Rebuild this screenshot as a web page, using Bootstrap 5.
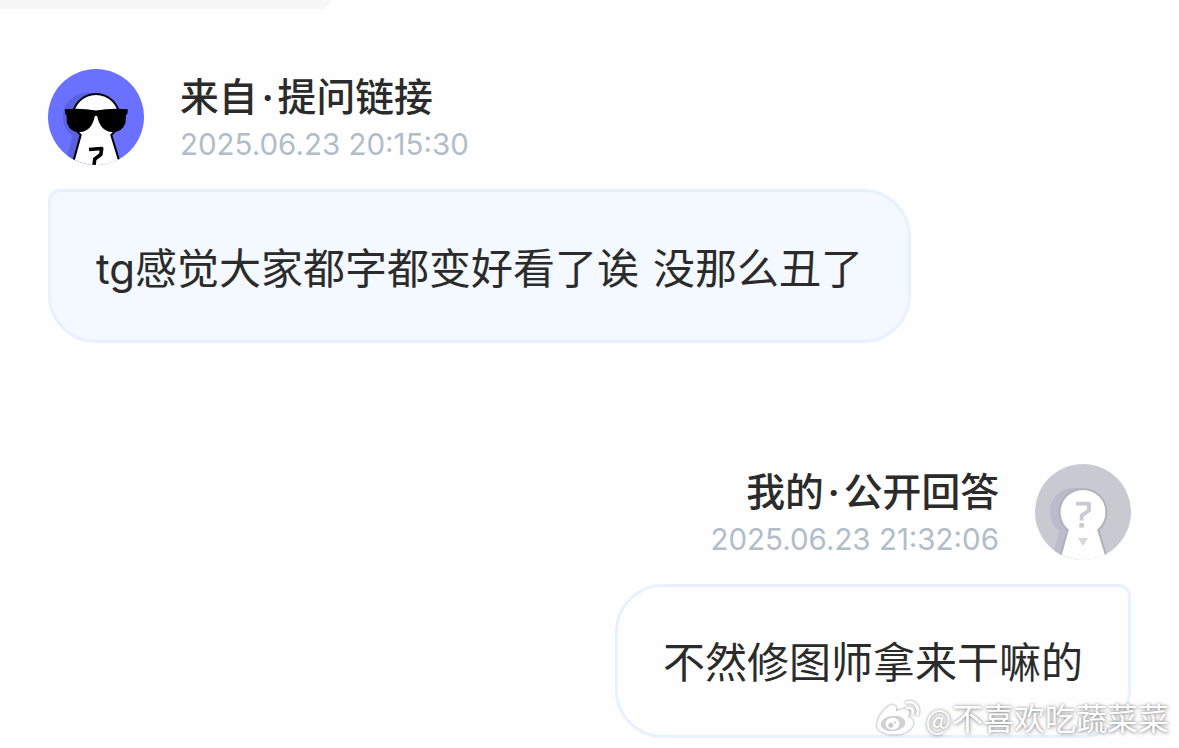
<!DOCTYPE html>
<html lang="zh-CN">
<head>
  <meta charset="UTF-8">
  <meta name="viewport" content="width=device-width, initial-scale=1">
  <title>提问与回答</title>
  <link href="https://cdn.jsdelivr.net/npm/bootstrap@5.3.2/dist/css/bootstrap.min.css" rel="stylesheet">
  <style>
    body {
      font-family: "Inter", "Noto Sans CJK SC", sans-serif;
      color: #2b2b2b;
      background-color: #fefefe;
      height: 748px;
    }
    .prev-bubble {
      width: 330px;
      height: 9px;
      background-color: #f7f7f7;
      border-bottom-right-radius: 9px;
    }
    .thread {
      padding: 60px 48px 0;
    }
    .avatar {
      width: 96px;
      height: 96px;
    }
    .sender {
      gap: 36px;
      height: 96px;
      margin-bottom: 24px;
    }
    .sender-name {
      height: 55px;
      font-size: 38.8px;
      line-height: 50px;
      font-weight: 500;
      font-family: "Noto Sans CJK SC", sans-serif;
    }
    .dot {
      display: inline-block;
      width: 20px;
      line-height: 1;
      text-align: center;
      font-family: "Inter", sans-serif;
      font-weight: 600;
    }
    .sent-at {
      font-size: 29.5px;
      line-height: 40px;
      color: #b1bdc8;
    }
    .bubble {
      height: 154px;
      font-size: 42px;
      line-height: 60px;
      word-spacing: 2px;
      border: 3px solid #e8f2fe;
      white-space: nowrap;
    }
    .bubble-ask {
      width: 863px;
      padding: 6px 0 0 45px;
      background-color: #f4f8ff;
      border-radius: 12px 48px 48px 48px;
    }
    .bubble-reply {
      width: 516px;
      padding: 4px 0 0 45px;
      border-radius: 48px 12px 48px 48px;
    }
    .message-reply {
      margin-top: 121px;
    }
    .watermark {
      right: 10px;
      bottom: 6px;
      gap: 5px;
      font-size: 31px;
      line-height: 46px;
      color: #fff;
      font-family: "Noto Sans CJK SC", sans-serif;
      text-shadow: 0 0 3px rgba(0, 0, 0, .35), 1px 1px 4px rgba(0, 0, 0, .3);
    }
    .watermark svg {
      width: 44px;
      height: 36px;
      filter: drop-shadow(0 0 1px rgba(0, 0, 0, .5));
    }
    .at-sign {
      font-size: 27px;
      margin-right: 1px;
    }
  </style>
</head>
<body class="position-relative overflow-hidden">
  <div class="prev-bubble"></div>

  <main class="thread d-flex flex-column">
    <section class="message">
      <div class="sender d-flex">
        <svg class="avatar flex-shrink-0" viewBox="0 0 96 96">
          <defs>
            <clipPath id="round"><circle cx="48" cy="48" r="48"/></clipPath>
          </defs>
          <g clip-path="url(#round)">
            <rect width="96" height="96" fill="#6a70ff"/>
            <path d="M16 98 L24.500 67 A24 24 0 0 1 42 24 L60 40 L40 98 Z" fill="#5b60de"/>
            <path d="M23 101 L32.700 66 A23.400 23.400 0 1 1 63.300 66 L74 101 Z" fill="#fefefe" stroke="#000" stroke-width="2"/>
            <path d="M16.800 40.300 Q33 38.800 48 41.500 Q63 38.800 79.900 40.300 L79.300 45 L77.900 46 L77.500 54 Q74 63.500 64 63 Q52.500 62.500 49.300 47.500 Q48 46 46.700 47.500 Q43.500 62.500 32 63 Q22 63.500 19 54 L18.500 46 L17.300 45 Z" fill="#000"/>
            <path d="M41 80.500 L53.700 79.500 L52.800 85.500 L46.800 90 L46 96" fill="none" stroke="#000" stroke-width="3.600" stroke-linejoin="round"/>
          </g>
        </svg>
        <div>
          <div class="sender-name">来自<span class="dot">·</span>提问链接</div>
          <div class="sent-at">2025.06.23 20:15:30</div>
        </div>
      </div>
      <div class="bubble bubble-ask d-flex align-items-center">tg感觉大家都字都变好看了诶 没那么丑了</div>
    </section>

    <section class="message message-reply d-flex flex-column align-items-end">
      <div class="sender d-flex flex-row-reverse text-end">
        <svg class="avatar flex-shrink-0" viewBox="0 0 96 96">
          <g clip-path="url(#round)">
            <rect width="96" height="96" fill="#c9c9d2"/>
            <path d="M16 98 L24.500 67 A24 24 0 0 1 42 24 L60 40 L40 98 Z" fill="#bbbbcb"/>
            <path d="M23 101 L32.700 66 A23.400 23.400 0 1 1 63.300 66 L74 101 Z" fill="#fefefe" stroke="#b1b1bc" stroke-width="2"/>
            <path d="M41 39.700 H54 V46.500 L46.600 51.500 V56.500" fill="none" stroke="#c9c9d2" stroke-width="3.800" stroke-linejoin="round"/>
            <rect x="44.300" y="59" width="4.600" height="4.600" fill="#c9c9d2"/>
            <path d="M43 74 H53 L48 82 Z" fill="#d7d7de"/>
          </g>
        </svg>
        <div>
          <div class="sender-name">我的<span class="dot">·</span>公开回答</div>
          <div class="sent-at">2025.06.23 21:32:06</div>
        </div>
      </div>
      <div class="bubble bubble-reply d-flex align-items-center">不然修图师拿来干嘛的</div>
    </section>
  </main>

  <div class="watermark position-absolute d-flex align-items-center">
    <svg viewBox="0 0 44 36">
      <path d="M1 25 C1 18 9 7 15 5 C19 4 21 7 20 11 C25 9 31 8 33 11 C34 13 33 15 32 17 C37 18 39 23 36 27 C32 33 25 35 17 34.500 C8 34 1 31 1 25 Z" fill="#fff"/>
      <ellipse cx="17" cy="23.500" rx="12.300" ry="7.800" fill="#d2d2d2" transform="rotate(-6 17 23.500)"/>
      <ellipse cx="16.500" cy="23.800" rx="7" ry="6" fill="#fff"/>
      <circle cx="14.800" cy="25.300" r="2.500" fill="#c8c8c8"/>
      <circle cx="19" cy="22.500" r="1.100" fill="#c8c8c8"/>
      <path d="M30.500 2.500 C38 0.500 44 7 41.500 14.500 M31 8 C35 7 37.500 10 36.500 13.500" fill="none" stroke="#fff" stroke-width="2.800" stroke-linecap="round"/>
    </svg>
    <span><span class="at-sign">@</span>不喜欢吃蔬菜菜</span>
  </div>

  <script src="https://cdn.jsdelivr.net/npm/bootstrap@5.3.2/dist/js/bootstrap.bundle.min.js"></script>
</body>
</html>
